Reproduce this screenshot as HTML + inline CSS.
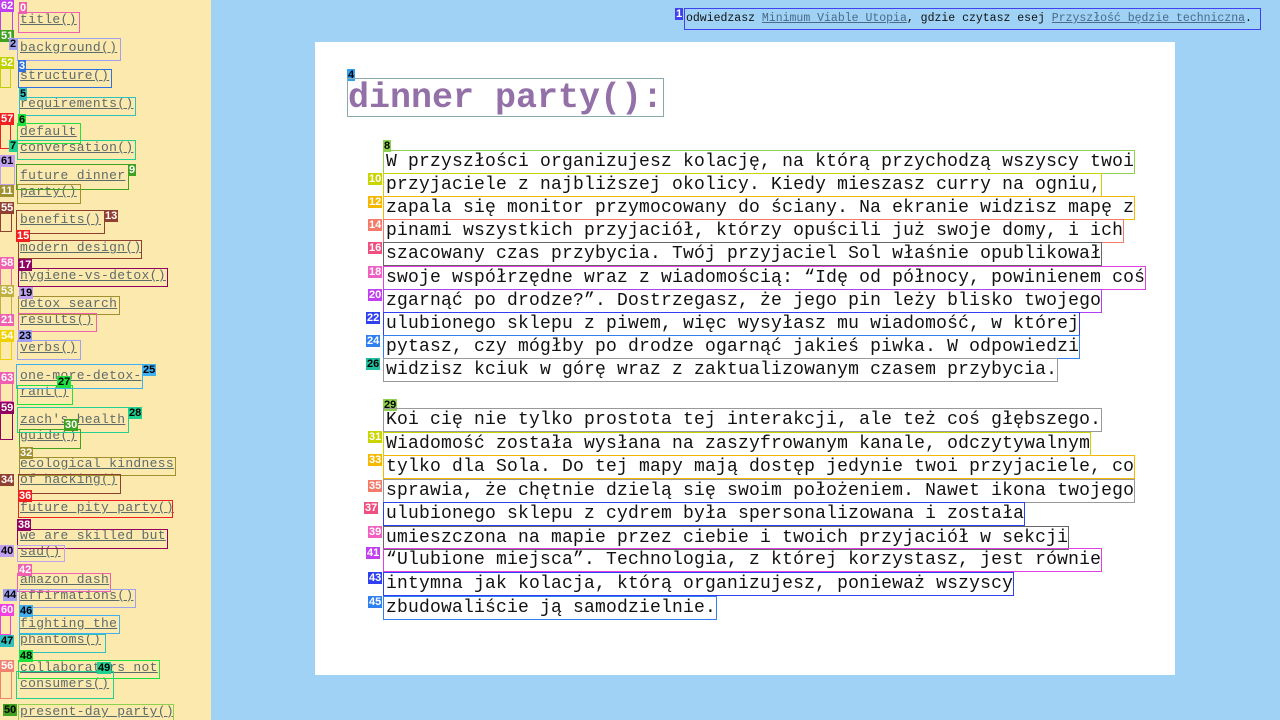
<!DOCTYPE html>
<html><head><meta charset="utf-8"><style>
*{margin:0;padding:0;box-sizing:border-box}
html,body{width:1280px;height:720px;overflow:hidden}
body{background:#9fd2f5;position:relative;font-family:"Liberation Mono",monospace}
#side{position:absolute;left:0;top:0;width:211px;height:720px;background:#fce9ae}
.s{position:absolute;left:20px;font-size:13px;line-height:16px;color:#5d6b6b;text-decoration:underline;white-space:nowrap;font-family:"Liberation Mono",monospace;letter-spacing:0.3px}
.b{position:absolute;border:1px solid}
#card{position:absolute;left:315px;top:42px;width:860px;height:633px;background:#fff}
h1{position:absolute;left:347px;top:78px;height:39px;font-size:35px;line-height:38px;color:#9470a8;font-family:"Liberation Mono",monospace;font-weight:bold;border:1px solid #8aa;padding:0}
.l{position:absolute;left:383px;height:24px;font-size:18px;line-height:22px;color:#111;white-space:nowrap;border:1px solid;padding-left:2px;font-family:"Liberation Mono",monospace;letter-spacing:0.2px}
.t{position:absolute;font-size:11px;line-height:12px;padding:0 1px;color:#fff;font-family:"Liberation Sans",sans-serif;font-weight:bold}
#top{position:absolute;left:684px;top:8px;width:577px;height:22px;border:1px solid #4040f0;font-size:11.5px;line-height:20px;padding-left:1px;color:#111;white-space:nowrap;font-family:"Liberation Mono",monospace}
#top a{color:#4a6a8a;text-decoration:underline}
</style></head><body>
<div id="side">
<div class="s" style="top:12px">title()</div>
<div class="s" style="top:40px">background()</div>
<div class="s" style="top:68px">structure()</div>
<div class="s" style="top:96px">requirements()</div>
<div class="s" style="top:124px">default</div>
<div class="s" style="top:140px">conversation()</div>
<div class="s" style="top:168px">future dinner</div>
<div class="s" style="top:184px">party()</div>
<div class="s" style="top:212px">benefits()</div>
<div class="s" style="top:240px">modern design()</div>
<div class="s" style="top:268px">hygiene-vs-detox()</div>
<div class="s" style="top:296px">detox search</div>
<div class="s" style="top:312px">results()</div>
<div class="s" style="top:340px">verbs()</div>
<div class="s" style="top:368px">one-more-detox-</div>
<div class="s" style="top:384px">rant()</div>
<div class="s" style="top:412px">zach's health</div>
<div class="s" style="top:428px">guide()</div>
<div class="s" style="top:456px">ecological kindness</div>
<div class="s" style="top:472px">of hacking()</div>
<div class="s" style="top:500px">future pity party()</div>
<div class="s" style="top:528px">we are skilled but</div>
<div class="s" style="top:544px">sad()</div>
<div class="s" style="top:572px">amazon dash</div>
<div class="s" style="top:588px">affirmations()</div>
<div class="s" style="top:616px">fighting the</div>
<div class="s" style="top:632px">phantoms()</div>
<div class="s" style="top:660px">collaborators not</div>
<div class="s" style="top:676px">consumers()</div>
<div class="s" style="top:704px">present-day party()</div>
<div class="b" style="left:18px;top:12px;width:62px;height:21px;border-color:#f060b0"></div>
<div class="b" style="left:17px;top:38px;width:104px;height:23px;border-color:#a0a0f0"></div>
<div class="b" style="left:18px;top:69px;width:94px;height:19px;border-color:#3070e0"></div>
<div class="b" style="left:19px;top:97px;width:117px;height:19px;border-color:#30c0c0"></div>
<div class="b" style="left:17px;top:123px;width:64px;height:21px;border-color:#20e040"></div>
<div class="b" style="left:17px;top:140px;width:119px;height:20px;border-color:#20d090"></div>
<div class="b" style="left:16px;top:164px;width:113px;height:26px;border-color:#40a020"></div>
<div class="b" style="left:17px;top:184px;width:64px;height:20px;border-color:#a09030"></div>
<div class="b" style="left:16px;top:210px;width:89px;height:24px;border-color:#904030"></div>
<div class="b" style="left:18px;top:240px;width:124px;height:19px;border-color:#904030"></div>
<div class="b" style="left:18px;top:268px;width:150px;height:19px;border-color:#900060"></div>
<div class="b" style="left:18px;top:296px;width:102px;height:19px;border-color:#a09030"></div>
<div class="b" style="left:18px;top:313px;width:79px;height:19px;border-color:#f060b0"></div>
<div class="b" style="left:17px;top:340px;width:64px;height:20px;border-color:#a0a0f0"></div>
<div class="b" style="left:0;top:5px;width:13px;height:26px;border-color:#c040f0"></div>
<div class="b" style="left:0;top:57px;width:11px;height:31px;border-color:#c0d000"></div>
<div class="b" style="left:0;top:113px;width:11px;height:36px;border-color:#f02020"></div>
<div class="b" style="left:0;top:155px;width:15px;height:30px;border-color:#c0a0f0"></div>
<div class="b" style="left:0;top:204px;width:12px;height:28px;border-color:#904030"></div>
<div class="b" style="left:0;top:258px;width:12px;height:30px;border-color:#f060b0"></div>
<div class="b" style="left:0;top:285px;width:12px;height:30px;border-color:#c0b040"></div>
<div class="b" style="left:0;top:330px;width:12px;height:30px;border-color:#f0d000"></div>
<div class="b" style="left:0;top:372px;width:13px;height:30px;border-color:#f060b0"></div>
<div class="b" style="left:0;top:403px;width:13px;height:37px;border-color:#900060"></div>
<div class="b" style="left:0;top:605px;width:11px;height:30px;border-color:#f040e0"></div>
<div class="b" style="left:0;top:668px;width:12px;height:31px;border-color:#f08070"></div>
<div class="b" style="left:16px;top:364px;width:127px;height:25px;border-color:#40b0f0"></div>
<div class="b" style="left:17px;top:385px;width:56px;height:20px;border-color:#20e040"></div>
<div class="b" style="left:17px;top:407px;width:112px;height:26px;border-color:#20d090"></div>
<div class="b" style="left:19px;top:429px;width:62px;height:20px;border-color:#40a020"></div>
<div class="b" style="left:19px;top:457px;width:157px;height:19px;border-color:#a09030"></div>
<div class="b" style="left:18px;top:474px;width:103px;height:20px;border-color:#904030"></div>
<div class="b" style="left:18px;top:500px;width:155px;height:18px;border-color:#f02020"></div>
<div class="b" style="left:17px;top:529px;width:151px;height:20px;border-color:#900060"></div>
<div class="b" style="left:17px;top:545px;width:48px;height:17px;border-color:#c0a0f0"></div>
<div class="b" style="left:17px;top:573px;width:94px;height:19px;border-color:#f060b0"></div>
<div class="b" style="left:19px;top:589px;width:117px;height:19px;border-color:#a0a0f0"></div>
<div class="b" style="left:19px;top:615px;width:101px;height:19px;border-color:#40b0f0"></div>
<div class="b" style="left:19px;top:634px;width:87px;height:19px;border-color:#30c0c0"></div>
<div class="b" style="left:18px;top:660px;width:142px;height:19px;border-color:#20e040"></div>
<div class="b" style="left:16px;top:671px;width:98px;height:28px;border-color:#20d090"></div>
<div class="b" style="left:18px;top:704px;width:156px;height:20px;border-color:#8fd14f"></div>
<span class="t" style="left:0;top:0;background:#c040f0">62</span>
<span class="t" style="left:19px;top:2px;background:#f060b0">0</span>
<span class="t" style="left:0;top:30px;background:#40a020">51</span>
<span class="t" style="left:9px;top:38px;background:#a0a0f0;color:#000">2</span>
<span class="t" style="left:0;top:57px;background:#c0d000">52</span>
<span class="t" style="left:18px;top:60px;background:#3070e0">3</span>
<span class="t" style="left:19px;top:88px;background:#30c0c0;color:#000">5</span>
<span class="t" style="left:0;top:113px;background:#f02020">57</span>
<span class="t" style="left:18px;top:114px;background:#20e040;color:#000">6</span>
<span class="t" style="left:9px;top:140px;background:#20d090;color:#000">7</span>
<span class="t" style="left:0;top:155px;background:#c0a0f0;color:#000">61</span>
<span class="t" style="left:128px;top:164px;background:#40a020">9</span>
<span class="t" style="left:0;top:185px;background:#a09030">11</span>
<span class="t" style="left:0;top:202px;background:#904030">55</span>
<span class="t" style="left:104px;top:210px;background:#904030">13</span>
<span class="t" style="left:16px;top:230px;background:#f02020">15</span>
<span class="t" style="left:0;top:257px;background:#f060b0">58</span>
<span class="t" style="left:18px;top:259px;background:#900060">17</span>
<span class="t" style="left:0;top:285px;background:#c0b040">53</span>
<span class="t" style="left:19px;top:287px;background:#c0a0f0;color:#000">19</span>
<span class="t" style="left:0;top:314px;background:#f060b0">21</span>
<span class="t" style="left:0;top:330px;background:#f0d000">54</span>
<span class="t" style="left:18px;top:330px;background:#a0a0f0;color:#000">23</span>
<span class="t" style="left:0;top:372px;background:#f060b0">63</span>
<span class="t" style="left:142px;top:364px;background:#40b0f0;color:#000">25</span>
<span class="t" style="left:57px;top:376px;background:#20e040;color:#000">27</span>
<span class="t" style="left:0;top:402px;background:#900060">59</span>
<span class="t" style="left:128px;top:407px;background:#20d090;color:#000">28</span>
<span class="t" style="left:64px;top:419px;background:#40a020">30</span>
<span class="t" style="left:19px;top:447px;background:#a09030">32</span>
<span class="t" style="left:0;top:474px;background:#904030">34</span>
<span class="t" style="left:18px;top:490px;background:#f02020">36</span>
<span class="t" style="left:17px;top:519px;background:#900060">38</span>
<span class="t" style="left:0;top:545px;background:#c0a0f0;color:#000">40</span>
<span class="t" style="left:18px;top:564px;background:#f060b0">42</span>
<span class="t" style="left:3px;top:589px;background:#a0a0f0;color:#000">44</span>
<span class="t" style="left:0;top:604px;background:#f040e0">60</span>
<span class="t" style="left:19px;top:605px;background:#40b0f0;color:#000">46</span>
<span class="t" style="left:0;top:635px;background:#30c0c0;color:#000">47</span>
<span class="t" style="left:19px;top:650px;background:#20e040;color:#000">48</span>
<span class="t" style="left:0;top:660px;background:#f08070">56</span>
<span class="t" style="left:97px;top:662px;background:#20d090;color:#000">49</span>
<span class="t" style="left:3px;top:704px;background:#40a020;color:#000">50</span>
</div>
<div id="top"><span class="t" style="left:-10px;top:-1px;background:#4040f0">1</span>odwiedzasz <a>Minimum Viable Utopia</a>, gdzie czytasz esej <a>Przyszłość będzie techniczna</a>.</div>
<div id="card"></div>
<span class="t" style="left:347px;top:69px;background:#30a0f0;color:#000">4</span>
<h1>dinner party():</h1>
<span class="t" style="left:383px;top:140px;background:#8fd14f;color:#000">8</span>
<div class="l" style="top:150px;border-color:#8fd14f">W przyszłości organizujesz kolację, na którą przychodzą wszyscy twoi</div>
<span class="t" style="left:368px;top:173px;background:#c9d400">10</span>
<div class="l" style="top:173px;border-color:#c9d400">przyjaciele z najbliższej okolicy. Kiedy mieszasz curry na ogniu,</div>
<span class="t" style="left:368px;top:196px;background:#f5b800">12</span>
<div class="l" style="top:196px;border-color:#f5b800">zapala się monitor przymocowany do ściany. Na ekranie widzisz mapę z</div>
<span class="t" style="left:368px;top:219px;background:#f47a6a">14</span>
<div class="l" style="top:219px;border-color:#f47a6a">pinami wszystkich przyjaciół, którzy opuścili już swoje domy, i ich</div>
<span class="t" style="left:368px;top:242px;background:#f05080">16</span>
<div class="l" style="top:242px;border-color:#666">szacowany czas przybycia. Twój przyjaciel Sol właśnie opublikował</div>
<span class="t" style="left:368px;top:266px;background:#f060c0">18</span>
<div class="l" style="top:266px;border-color:#e040e0">swoje współrzędne wraz z wiadomością: “Idę od północy, powinienem coś</div>
<span class="t" style="left:368px;top:289px;background:#c040f0">20</span>
<div class="l" style="top:289px;border-color:#b040f0">zgarnąć po drodze?”. Dostrzegasz, że jego pin leży blisko twojego</div>
<span class="t" style="left:366px;top:312px;background:#3040f0">22</span>
<div class="l" style="top:312px;border-color:#3040f0">ulubionego sklepu z piwem, więc wysyłasz mu wiadomość, w której</div>
<span class="t" style="left:366px;top:335px;background:#3080f0">24</span>
<div class="l" style="top:335px;border-color:#3080f0">pytasz, czy mógłby po drodze ogarnąć jakieś piwka. W odpowiedzi</div>
<span class="t" style="left:366px;top:358px;background:#20c0a0;color:#000">26</span>
<div class="l" style="top:358px;border-color:#999">widzisz kciuk w górę wraz z zaktualizowanym czasem przybycia.</div>
<span class="t" style="left:383px;top:399px;background:#8fd14f;color:#000">29</span>
<div class="l" style="top:408px;border-color:#999">Koi cię nie tylko prostota tej interakcji, ale też coś głębszego.</div>
<span class="t" style="left:368px;top:431px;background:#c9d400">31</span>
<div class="l" style="top:432px;border-color:#c9d400">Wiadomość została wysłana na zaszyfrowanym kanale, odczytywalnym</div>
<span class="t" style="left:368px;top:454px;background:#f5b800">33</span>
<div class="l" style="top:455px;border-color:#f5b800">tylko dla Sola. Do tej mapy mają dostęp jedynie twoi przyjaciele, co</div>
<span class="t" style="left:368px;top:480px;background:#f47a6a">35</span>
<div class="l" style="top:479px;border-color:#999">sprawia, że chętnie dzielą się swoim położeniem. Nawet ikona twojego</div>
<span class="t" style="left:364px;top:502px;background:#f05080">37</span>
<div class="l" style="top:502px;border-color:#3040f0">ulubionego sklepu z cydrem była spersonalizowana i została</div>
<span class="t" style="left:368px;top:526px;background:#f060c0">39</span>
<div class="l" style="top:526px;border-color:#666">umieszczona na mapie przez ciebie i twoich przyjaciół w sekcji</div>
<span class="t" style="left:366px;top:547px;background:#c040f0">41</span>
<div class="l" style="top:548px;border-color:#e040e0">“Ulubione miejsca”. Technologia, z której korzystasz, jest równie</div>
<span class="t" style="left:368px;top:572px;background:#3040f0">43</span>
<div class="l" style="top:572px;border-color:#3040f0">intymna jak kolacja, którą organizujesz, ponieważ wszyscy</div>
<span class="t" style="left:368px;top:596px;background:#3080f0">45</span>
<div class="l" style="top:596px;border-color:#3080f0">zbudowaliście ją samodzielnie.</div>
</body></html>
